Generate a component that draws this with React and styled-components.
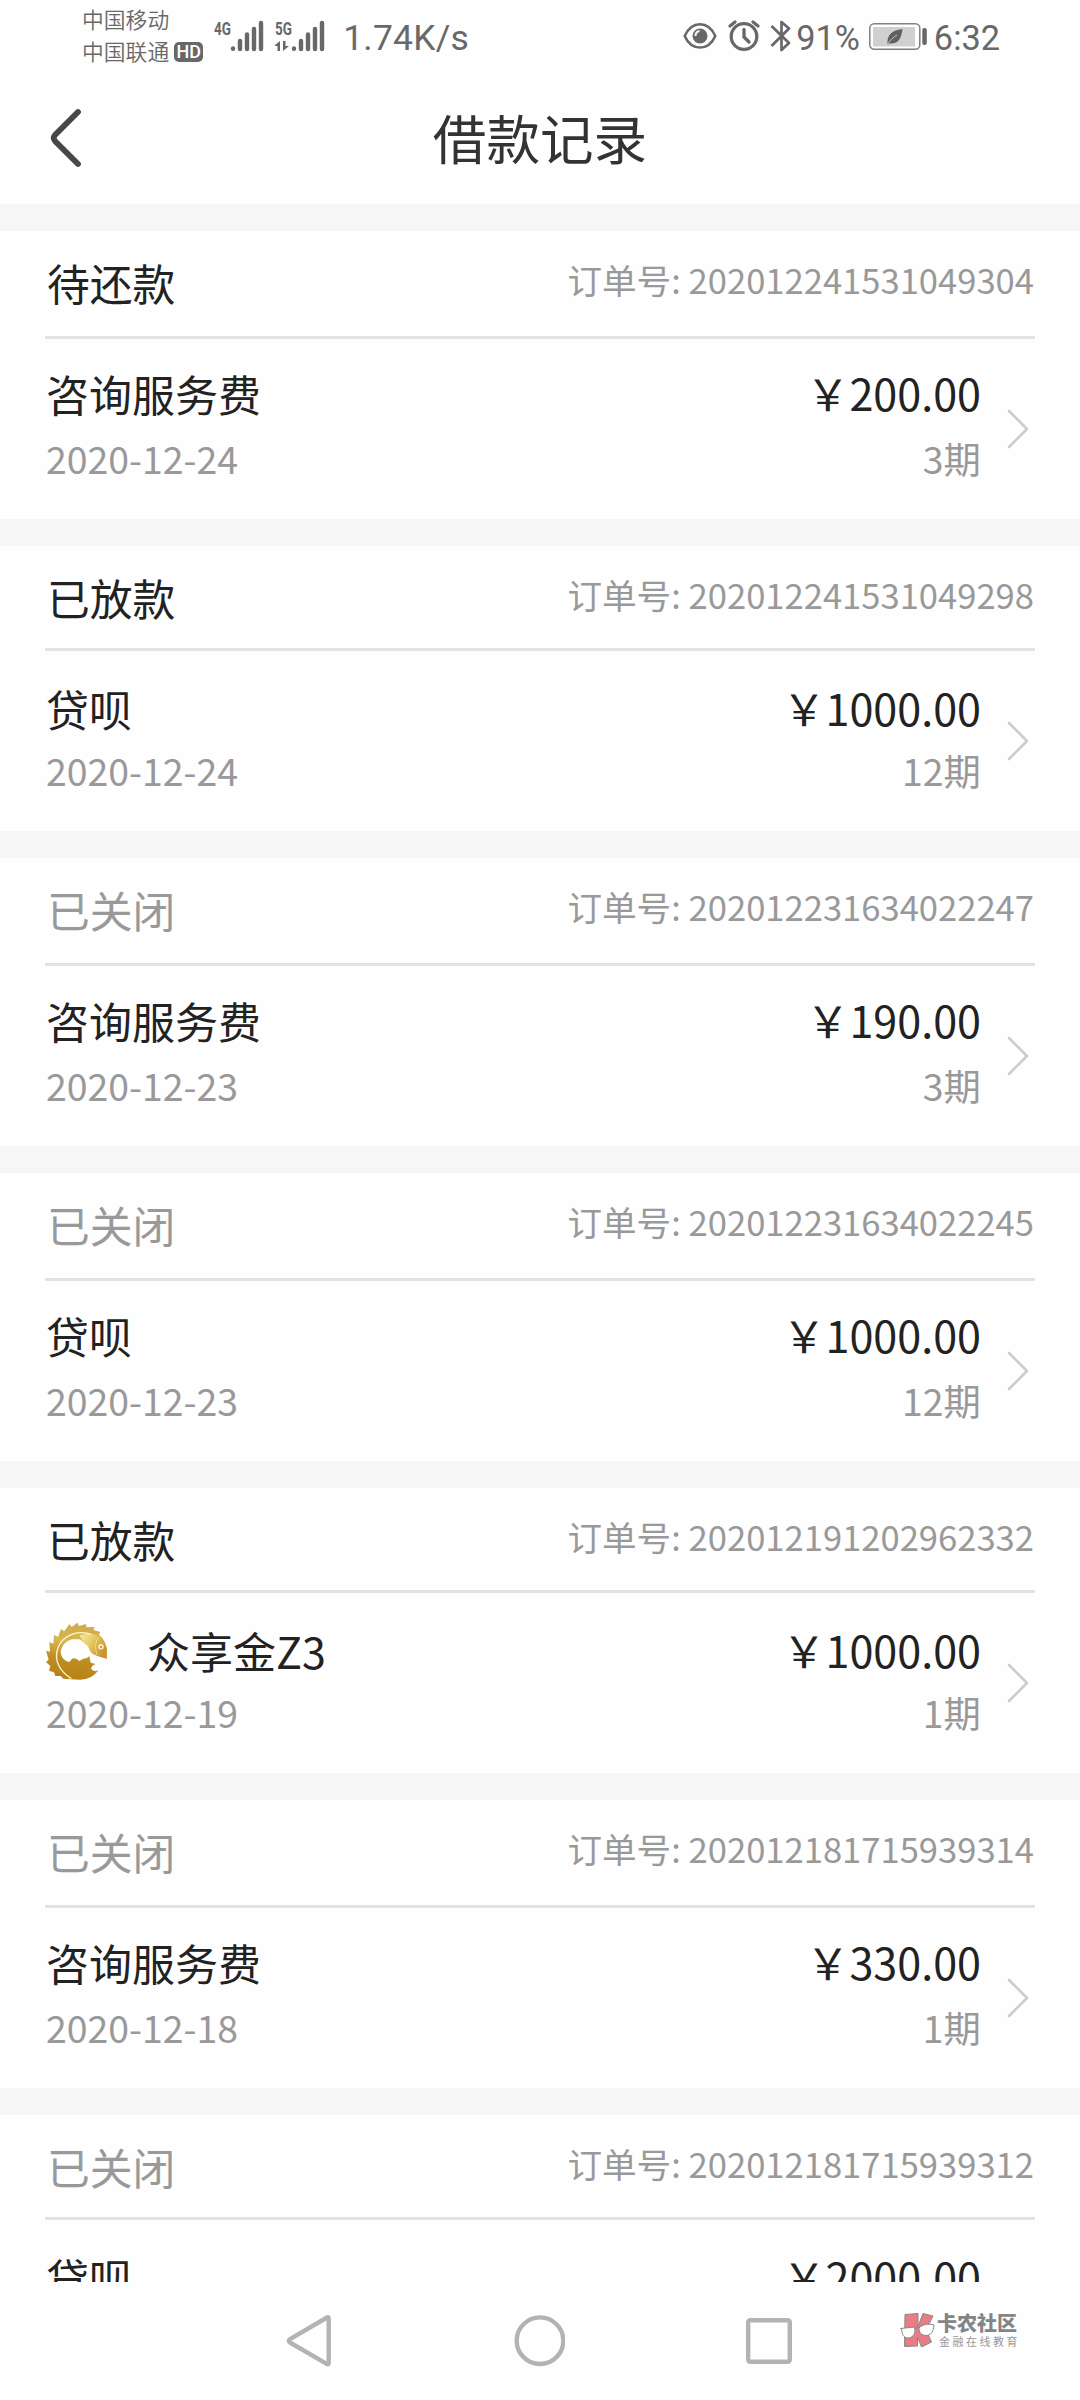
import React from 'react';
import styled, { createGlobalStyle } from 'styled-components';

const GlobalStyle = createGlobalStyle`
  * {
    box-sizing: border-box;
  }
  body {
    margin: 0;
    background: #fefefe;
    font-family: 'Noto Sans CJK SC', 'Noto Sans', sans-serif;
  }
  svg {
    display: block;
    flex: none;
  }
`;

const Page = styled.div`
  position: relative;
  width: 1080px;
  height: 2400px;
  display: flex;
  flex-direction: column;
  overflow: hidden;
  background: #fefefe;
  white-space: nowrap;
`;

const StatusBar = styled.div`
  height: 72px;
  flex: none;
  display: flex;
  align-items: flex-start;
  justify-content: space-between;
  padding: 0 80px 0 82px;
  color: #686868;
`;

const StatusGroup = styled.div`
  display: flex;
  align-items: flex-start;
`;

const Carriers = styled.div`
  display: flex;
  flex-direction: column;
  padding-top: 3px;
  font-size: 21.8px;
  font-weight: 350;
  line-height: 32px;
`;

const CarrierLine = styled.div`
  height: 32px;
  display: flex;
  align-items: center;
  gap: 5px;
`;

const HdBadge = styled.span`
  width: 29px;
  height: 20px;
  margin-top: 2px;
  border-radius: 5px;
  background: #686868;
  color: #fefefe;
  font-family: Roboto, sans-serif;
  font-size: 18px;
  font-weight: 500;
  line-height: 20px;
  text-align: center;
`;

const StatusText = styled.span`
  height: 72px;
  margin-left: ${({ $left }) => $left}px;
  font-family: Roboto, sans-serif;
  font-size: ${({ $size }) => $size}px;
  letter-spacing: ${({ $spacing }) => $spacing || 0}px;
  line-height: 76px;
`;

const StatusIcon = styled.svg`
  margin-left: ${({ $left }) => $left || 0}px;
`;

const TitleBar = styled.header`
  height: 132px;
  flex: none;
  display: grid;
  grid-template-columns: 120px 1fr 120px;
  align-items: center;
  color: #333;
`;

const BackButton = styled.button`
  padding: 0 0 0 48px;
  border: 0;
  background: none;
  color: #484848;
`;

const Title = styled.h1`
  margin: 0;
  padding-bottom: 3px;
  font-size: 53.6px;
  font-weight: 400;
  line-height: 80px;
  text-align: center;
`;

const List = styled.main`
  height: 2078px;
  flex: none;
  overflow: hidden;
  background: #f6f6f6;
  padding-top: 27px;
  display: flex;
  flex-direction: column;
  gap: 27px;
`;

const Card = styled.section`
  flex: none;
  padding: 0 45px;
  background: #fefefe;
`;

const CardHead = styled.div`
  height: ${({ $short }) => ($short ? 105 : 108)}px;
  display: flex;
  align-items: flex-start;
  justify-content: space-between;
  border-bottom: 3px solid #e3e3e3;
`;

const Status = styled.span`
  padding-left: 2px;
  font-size: 42.8px;
  line-height: 102px;
  color: ${({ $closed }) => ($closed ? '#999' : '#222')};
`;

const OrderNo = styled.span`
  padding-right: 1px;
  font-size: 34.6px;
  line-height: 97px;
  color: #999;
`;

const CardBody = styled.div`
  height: 180px;
  display: flex;
  align-items: flex-start;
  padding-top: ${({ $short }) => ($short ? 27 : 24)}px;
`;

const Column = styled.div`
  display: flex;
  flex-direction: column;
  gap: ${({ $short }) => ($short ? 8 : 11)}px;
  flex: ${({ $grow }) => ($grow ? 1 : 'none')};
  text-align: ${({ $grow }) => ($grow ? 'left' : 'right')};
`;

const Name = styled.div`
  height: 60px;
  display: flex;
  align-items: center;
  gap: 38px;
  padding-left: ${({ $logo }) => ($logo ? 0 : 1)}px;
  font-size: 43px;
  line-height: 60px;
  color: #222;
`;

const Amount = styled.div`
  height: 60px;
  font-size: 43.1px;
  line-height: 58px;
  color: #222;
`;

const Meta = styled.div`
  padding-left: 1px;
  font-size: 37.4px;
  line-height: 49px;
  color: #999;
`;

const Arrow = styled.svg`
  margin: ${({ $short }) => ($short ? 42 : 45)}px 5px 0 25px;
`;

const NavBar = styled.nav`
  height: 118px;
  flex: none;
  display: flex;
  justify-content: space-between;
  padding: 31px 286px 0;
`;

const Watermark = styled.div`
  position: absolute;
  left: 899px;
  top: 2311px;
  display: flex;
`;

const WatermarkText = styled.div`
  display: flex;
  flex-direction: column;
  padding-left: 1px;
`;

const Brand = styled.span`
  font-size: 20px;
  font-weight: 900;
  line-height: 24px;
  color: #858585;
`;

const Slogan = styled.span`
  padding-left: 2px;
  font-size: 11px;
  letter-spacing: 2.5px;
  line-height: 12px;
  color: #999;
`;

const Signal = ({ label, left, data }) => (
  <StatusIcon $left={left} width="50" height="54" viewBox="0 0 50 54" fill="#686868">
    <text x="0" y="34.5" fontFamily="Roboto, sans-serif" fontSize="18.5" fontWeight="700" textLength="17" lengthAdjust="spacingAndGlyphs">
      {label}
    </text>
    {data && <path d="M0 45 5 41v10H2.500v-5H0zM8 41h2.500v5H14L8 51z" />}
    <g stroke="#686868" strokeWidth="4.400" strokeLinecap="round">
      <path d="M19 48.500v.2M26 41v8M33 34.500v14.500M40 29v20M47 23v26" />
    </g>
  </StatusIcon>
);

const EyeIcon = () => (
  <StatusIcon width="34" height="60" viewBox="0 0 34 60" fill="none">
    <path d="M1.700 36C5 28.500 10.500 24.200 17 24.200S29 28.500 32.300 36C29 43.500 23.500 47.500 17 47.500S5 43.500 1.700 36z" stroke="#686868" strokeWidth="2.600" strokeLinejoin="round" />
    <circle cx="17" cy="36" r="7.500" fill="#686868" />
    <path d="M12.500 36c0-3 1.500-4.500 4-5" stroke="#fefefe" strokeWidth="2" />
  </StatusIcon>
);

const AlarmIcon = () => (
  <StatusIcon $left="11" width="32" height="60" viewBox="0 0 32 60" fill="none" stroke="#686868" strokeLinecap="round">
    <circle cx="16" cy="36.500" r="12.800" strokeWidth="3.300" />
    <path d="M16 29.500V37l5 5" strokeWidth="3.300" />
    <path d="M2 26l5-4M30 26l-5-4" strokeWidth="3.200" />
  </StatusIcon>
);

const BluetoothIcon = () => (
  <StatusIcon $left="10" width="22" height="60" viewBox="0 0 22 60" fill="none" stroke="#686868" strokeWidth="2.700">
    <path d="M1.500 26 19 43l-7.500 7V22l7.500 6.500L1.500 46" strokeLinejoin="round" />
  </StatusIcon>
);

const BatteryIcon = () => (
  <StatusIcon $left="9" width="60" height="60" viewBox="0 0 60 60">
    <rect x=".8" y="23.800" width="50" height="25.500" rx="4.500" fill="none" stroke="#808080" strokeWidth="1.500" />
    <rect x="4" y="27" width="42" height="19.500" fill="#d0d0d0" />
    <path d="M18.500 44c-.5-8 3-13.500 15-15-1 9-4 15.500-13 14.500l-1 1z" fill="#606060" />
    <path d="M19 44c2-4 5-6.500 9-9" fill="none" stroke="#d0d0d0" strokeWidth=".9" />
    <rect x="53.300" y="28" width="4.500" height="17" rx="2" fill="#686868" />
  </StatusIcon>
);

const FishLogo = () => (
  <svg width="64" height="59" viewBox="135 457 192 177">
    <defs>
      <linearGradient id="gold" x1=".55" y1="0" x2=".4" y2="1">
        <stop offset="0" stopColor="#d0aa48" />
        <stop offset=".35" stopColor="#d9b650" />
        <stop offset=".65" stopColor="#bf8b24" />
        <stop offset="1" stopColor="#b98211" />
      </linearGradient>
      <linearGradient id="head" x1="0" y1="0" x2="1" y2=".5">
        <stop offset="0" stopColor="#f6e9a8" />
        <stop offset=".45" stopColor="#e8cd68" />
        <stop offset="1" stopColor="#c9952f" />
      </linearGradient>
    </defs>
    <path
      d="M215 632L190 630 182 622 166 622 162 611 147 606 151 592 138 580 146 573 138 546 150 549 148 520 160 525 162 499 174 505 183 481 193 488 208 466 215 475 232 462 237 472 258 466 259 476 283 475 281 484 301 490 297 498Q318 515 321 545L320 570 291 561Q272 556 268 542 264 528 256 526L240 512H216Q188 520 182 548 183 573 205 580 213 578 215 571 226 565 238 577L250 570Q262 570 268 562L272 582 287 586Q272 592 274 602 282 611 295 605 276 633 240 633z"
      fill="url(#gold)"
    />
    <path d="M238 500Q270 490 297 502 317 518 321 545L320 570 291 561Q272 556 268 542 264 528 252 522z" fill="url(#head)" />
    <path d="M214 630C180 608 160 575 174 537c14-34 54-55 100-40" fill="none" stroke="#fff6d2" strokeWidth="4" />
    <path d="M296 506Q280 524 291 558" fill="none" stroke="#f7e9b4" strokeWidth="2" />
    <circle cx="303" cy="534" r="8" fill="#fff6d8" />
    <circle cx="303" cy="535" r="3.500" fill="#c4952c" />
  </svg>
);

const KLogo = () => (
  <svg width="37" height="40" viewBox="0 0 37 40" stroke="#888" strokeWidth="1">
    <path d="M6 3.500l13-1v13l5-13 10 2.500-7 14 5.500 12-10 5-4-10v9l-13 .5z" fill="#ea7c85" strokeLinejoin="round" />
    <path d="M1.500 17.500l14-1.500c1.500 6-1 10-5.500 11-5 .5-7.500-4-7-8zM20 17c4-4 9-4.500 15-3-.5 7-3.500 10.500-8 10.500s-7-3-7-7.500z" fill="#fefefe" />
    <path d="M15.500 17.500l4.500-1" />
  </svg>
);

const records = [
  { status: '待还款', order: '202012241531049304', name: '咨询服务费', date: '2020-12-24', amount: '200.00', periods: 3 },
  { status: '已放款', order: '202012241531049298', name: '贷呗', date: '2020-12-24', amount: '1000.00', periods: 12, short: true },
  { status: '已关闭', order: '202012231634022247', name: '咨询服务费', date: '2020-12-23', amount: '190.00', periods: 3 },
  { status: '已关闭', order: '202012231634022245', name: '贷呗', date: '2020-12-23', amount: '1000.00', periods: 12 },
  { status: '已放款', order: '202012191202962332', name: '众享金Z3', date: '2020-12-19', amount: '1000.00', periods: 1, short: true, logo: true },
  { status: '已关闭', order: '202012181715939314', name: '咨询服务费', date: '2020-12-18', amount: '330.00', periods: 1 },
  { status: '已关闭', order: '202012181715939312', name: '贷呗', date: '2020-12-18', amount: '2000.00', periods: 12, short: true },
];

const RecordCard = ({ record }) => {
  const { status, order, name, date, amount, periods, short, logo } = record;
  return (
    <Card>
      <CardHead $short={short}>
        <Status $closed={status === '已关闭'}>{status}</Status>
        <OrderNo>订单号: {order}</OrderNo>
      </CardHead>
      <CardBody $short={short}>
        <Column $grow $short={short}>
          <Name $logo={logo}>
            {logo && <FishLogo />}
            {name}
          </Name>
          <Meta>{date}</Meta>
        </Column>
        <Column $short={short}>
          <Amount>{'\uFFE5'}{amount}</Amount>
          <Meta>{periods}期</Meta>
        </Column>
        <Arrow $short={short} width="24" height="42" viewBox="0 0 24 42" fill="none" stroke="#ccc" strokeWidth="2.6" strokeLinecap="round" strokeLinejoin="round">
          <path d="M3 3 21 21 3 39" />
        </Arrow>
      </CardBody>
    </Card>
  );
};

const App = () => {
  return (
    <Page>
      <GlobalStyle />
      <StatusBar>
        <StatusGroup>
          <Carriers>
            <CarrierLine>中国移动</CarrierLine>
            <CarrierLine>
              中国联通<HdBadge>HD</HdBadge>
            </CarrierLine>
          </Carriers>
          <Signal label="4G" left={11} />
          <Signal label="5G" left={11} data />
          <StatusText $left={18} $size={35.5} $spacing={0.2}>1.74K/s</StatusText>
        </StatusGroup>
        <StatusGroup>
          <EyeIcon />
          <AlarmIcon />
          <BluetoothIcon />
          <StatusText $left={4} $size={34.3}>91%</StatusText>
          <BatteryIcon />
          <StatusText $left={5} $size={34.3}>6:32</StatusText>
        </StatusGroup>
      </StatusBar>
      <TitleBar>
        <BackButton aria-label="返回">
          <svg width="36" height="60" viewBox="0 0 36 60" fill="none" stroke="currentColor" strokeWidth="5.800" strokeLinecap="round">
            <path d="M30 4 7 27q-2.500 3 0 6l23 23" />
          </svg>
        </BackButton>
        <Title>借款记录</Title>
      </TitleBar>
      <List>
        {records.map((record) => (
          <RecordCard key={record.order} record={record} />
        ))}
      </List>
      <NavBar>
        <svg width="46" height="56" viewBox="0 0 46 56" fill="none" stroke="#b3b3b3" strokeWidth="4.400" strokeLinejoin="round">
          <path d="M41 4.500Q42.700 3.500 42.700 6v43.500q0 2.500-2 1.300L4 29.500q-2.500-1.700 0-3.400z" />
        </svg>
        <svg width="52" height="56" viewBox="0 0 52 56" fill="none" stroke="#b3b3b3" strokeWidth="4.400">
          <circle cx="27" cy="27.700" r="23.300" />
        </svg>
        <svg width="48" height="56" viewBox="0 0 48 56" fill="none" stroke="#b3b3b3" strokeWidth="4.400">
          <rect x="2.200" y="7.200" width="41.600" height="41.600" rx="2" />
        </svg>
      </NavBar>
      <Watermark>
        <KLogo />
        <WatermarkText>
          <Brand>卡农社区</Brand>
          <Slogan>金融在线教育</Slogan>
        </WatermarkText>
      </Watermark>
    </Page>
  );
};

export default App;
